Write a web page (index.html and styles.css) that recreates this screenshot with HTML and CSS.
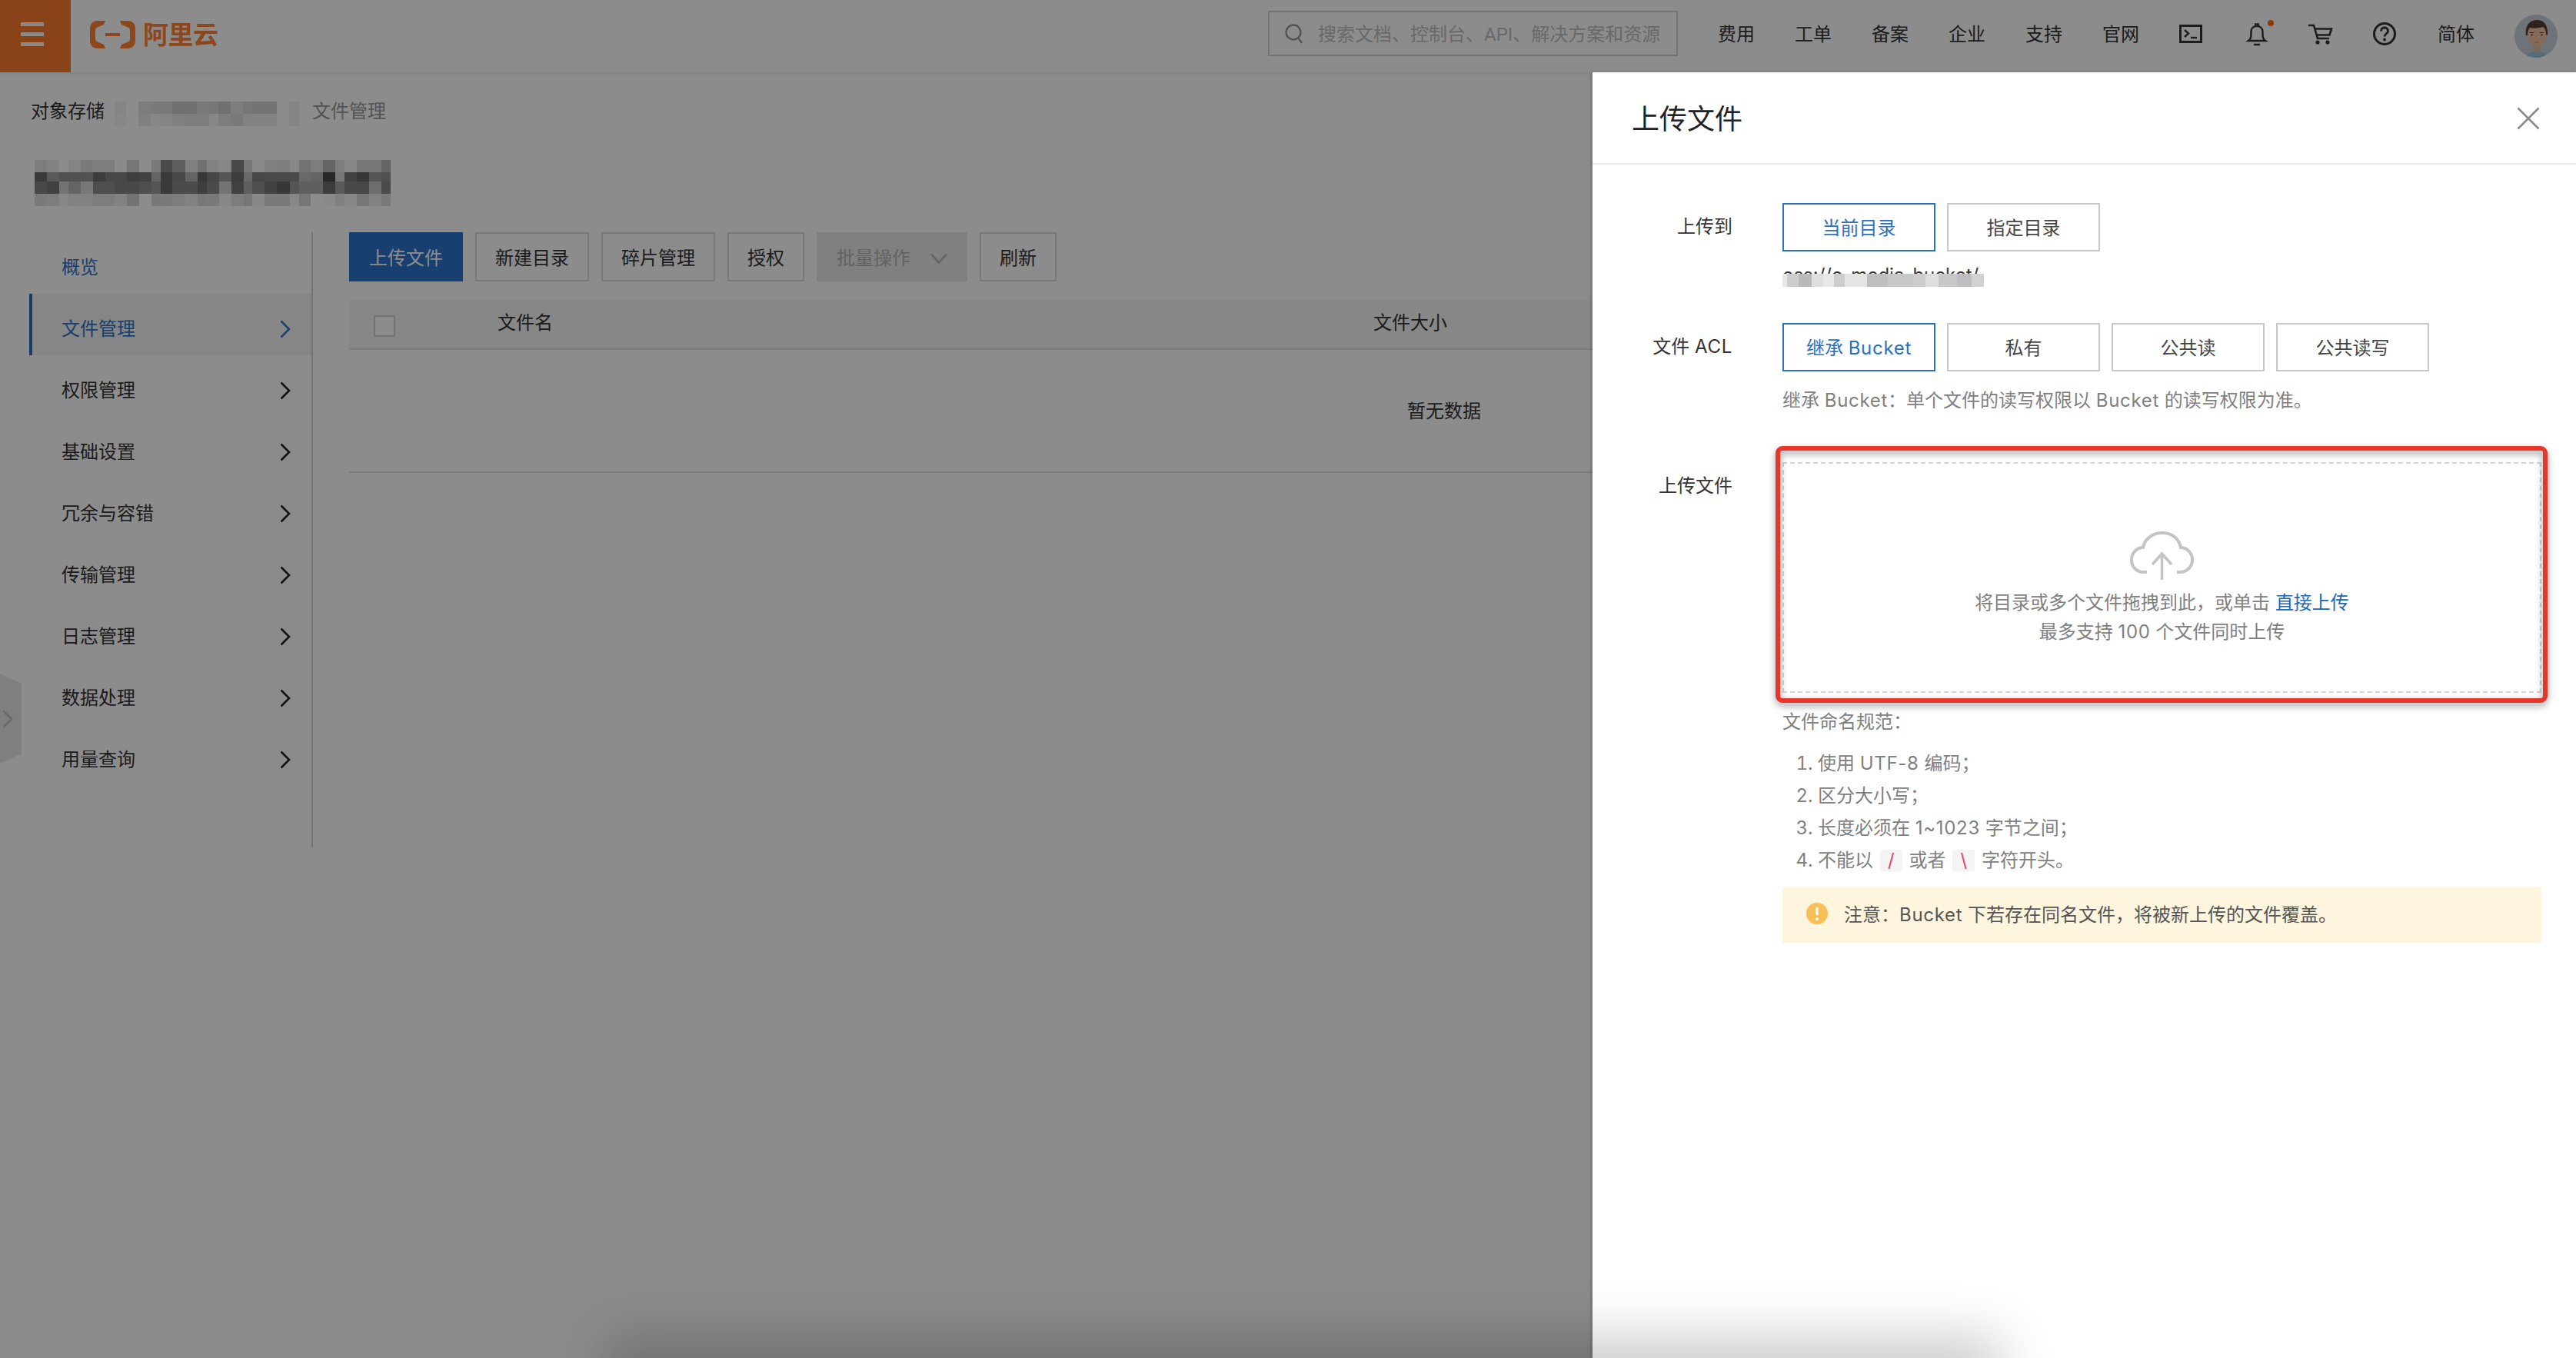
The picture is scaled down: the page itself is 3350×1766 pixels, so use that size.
FILE: index.html
```html
<!DOCTYPE html>
<html lang="zh-CN">
<head>
<meta charset="utf-8">
<title>上传文件</title>
<link rel="stylesheet" href="styles.css">
</head>
<body>
<svg class="sprites" aria-hidden="true"><symbol id="chev" viewBox="0 0 14 24"><path d="M1.5 1.5 12 12 1.5 22.5" fill="none" stroke="currentColor" stroke-width="2.6"/></symbol></svg>

<header class="topbar">
  <div class="burger"><i></i><i></i><i></i></div>
  <div class="logo">
    <svg class="logo-mark" viewBox="0 0 59 36"><path d="M20 0H10C4 0 0 4 0 10V26C0 32 4 36 10 36H20L18 31 11 28C8 27 7 26 7 23V13C7 10 8 9 11 8L18 5ZM39 0H49C55 0 59 4 59 10V26C59 32 55 36 49 36H39L41 31 48 28C51 27 52 26 52 23V13C52 10 51 9 48 8L41 5ZM20 16H39V20H20Z" fill="currentColor"/></svg>
    <span class="logo-text">阿里云</span>
  </div>
  <div class="spacer"></div>
  <div class="search">
    <svg class="search-icon" viewBox="0 0 24 26"><circle cx="11" cy="11" r="9.5" fill="none" stroke="currentColor" stroke-width="2.4"/><path d="M17 18l5 7" stroke="currentColor" stroke-width="2.4"/></svg>
    <span>搜索文档、控制台、API、解决方案和资源</span>
  </div>
  <nav class="topnav">
    <a>费用</a><a>工单</a><a>备案</a><a>企业</a><a>支持</a><a>官网</a>
    <svg class="ticon" viewBox="0 0 32 32"><rect x="1.5" y="5.5" width="27" height="21" fill="none" stroke="currentColor" stroke-width="3"/><path d="M7 11l5 4.500-5 4.500" fill="none" stroke="currentColor" stroke-width="2.4"/><path d="M15 21h8" stroke="currentColor" stroke-width="2.4"/></svg>
    <svg class="ticon" viewBox="0 0 32 32"><path d="M6 25h22c-3-2-3.500-4-3.500-8v-4c0-4-3-7-7.500-7s-7.500 3-7.500 7v4c0 4-.5 6-3.500 8Z" fill="none" stroke="currentColor" stroke-width="2.4"/><path d="M14 3.500h6M13 30h8" stroke="currentColor" stroke-width="2.6"/><circle cx="35" cy="2" r="4" class="dot"/></svg>
    <svg class="ticon" viewBox="0 0 32 32"><path d="M0 5h7l5 17h15M8 9.500h22l-2.500 8H11" fill="none" stroke="currentColor" stroke-width="2.6"/><circle cx="12" cy="27" r="2.600" fill="currentColor"/><circle cx="25" cy="27" r="2.600" fill="currentColor"/></svg>
    <svg class="ticon" viewBox="0 0 32 32"><circle cx="15" cy="16" r="13.500" fill="none" stroke="currentColor" stroke-width="3"/><path d="M10.500 12.500c0-6 9-6 9 0 0 3-4.500 3.500-4.500 7" fill="none" stroke="currentColor" stroke-width="2.800"/><circle cx="15" cy="23.500" r="1.900" fill="currentColor"/></svg>
    <a>简体</a>
    <svg class="avatar" viewBox="0 0 56 56">
      <defs><clipPath id="avc"><circle cx="28" cy="28" r="28"/></clipPath></defs>
      <g clip-path="url(#avc)">
        <rect width="56" height="56" fill="#c6d2dc"/>
        <path d="M15 56c1-6 7-8 14-9 7 1 13 3 14 9Z" fill="#9cc6dc"/>
        <path d="M24 36h10v10l-5 3-5-3Z" fill="#e8bc9c"/>
        <ellipse cx="29" cy="25" rx="12.500" ry="17" fill="#f0c4a2"/>
        <path d="M15 27C13 13 21 7 29.500 7 38 7 44 13 43 27l-2-1c0-5-1-8-4-10-6 2-12 2-17 1-2 2-3 5-3 10Z" fill="#563c36"/>
        <path d="M20 23.500h5M33 23.500h5" stroke="#563c36" stroke-width="1.200"/>
        <circle cx="22.500" cy="26.500" r="1.100" fill="#3c2a25"/><circle cx="35.500" cy="26.500" r="1.100" fill="#3c2a25"/>
        <path d="M26 36h6" stroke="#b88468" stroke-width="1"/>
      </g>
    </svg>
  </nav>
</header>

<main class="page">
  <div class="crumbs">
    <span>对象存储</span>
    <svg class="mosaic crumb-mosaic" id="m-crumb" viewBox="356 22 720 96" preserveAspectRatio="none"></svg>
    <span class="crumb-last">文件管理</span>
  </div>
  <svg class="mosaic title-mosaic" id="m-title" viewBox="44 250 1390 180" preserveAspectRatio="none"></svg>

  <div class="workspace">
    <aside class="side">
      <a class="side-item link">概览</a>
      <a class="side-item link active">文件管理<svg class="chev"><use href="#chev"/></svg></a>
      <a class="side-item">权限管理<svg class="chev"><use href="#chev"/></svg></a>
      <a class="side-item">基础设置<svg class="chev"><use href="#chev"/></svg></a>
      <a class="side-item">冗余与容错<svg class="chev"><use href="#chev"/></svg></a>
      <a class="side-item">传输管理<svg class="chev"><use href="#chev"/></svg></a>
      <a class="side-item">日志管理<svg class="chev"><use href="#chev"/></svg></a>
      <a class="side-item">数据处理<svg class="chev"><use href="#chev"/></svg></a>
      <a class="side-item">用量查询<svg class="chev"><use href="#chev"/></svg></a>
    </aside>
    <section class="content">
      <div class="toolbar">
        <button class="btn primary">上传文件</button>
        <button class="btn">新建目录</button>
        <button class="btn">碎片管理</button>
        <button class="btn">授权</button>
        <button class="btn disabled">批量操作<svg class="btn-caret" viewBox="0 0 22 14"><path d="M1 1.500l10 11 10-11" fill="none" stroke="currentColor" stroke-width="2.400"/></svg></button>
        <button class="btn">刷新</button>
      </div>
      <div class="table-head">
        <span class="checkbox"></span>
        <span>文件名</span>
        <span>文件大小</span>
      </div>
      <div class="table-empty">暂无数据</div>
    </section>
  </div>
</main>

<div class="side-tab"><svg class="tab-chev" viewBox="0 0 14 24"><use href="#chev"/></svg></div>
<div class="overlay"></div>

<aside class="panel">
  <header class="panel-head">
    <h1>上传文件</h1>
    <svg class="close" viewBox="0 0 30 30"><path d="M1.500 1.500l27 27M28.500 1.500l-27 27" stroke="currentColor" stroke-width="2.600"/></svg>
  </header>
  <div class="panel-body">
    <div class="row row-to">
      <label class="label">上传到</label>
      <div class="ctl">
        <div class="opts"><span class="opt on">当前目录</span><span class="opt">指定目录</span></div>
        <div class="path-wrap">
          <span class="path">oss://o-media-bucket/</span>
          <svg class="path-blur" id="m-path" viewBox="302 0 330 50" preserveAspectRatio="none"></svg>
        </div>
      </div>
    </div>
    <div class="row row-acl">
      <label class="label">文件 <span class="en">ACL</span></label>
      <div class="ctl">
        <div class="opts"><span class="opt on"><span>继承 <span class="en">Bucket</span></span></span><span class="opt">私有</span><span class="opt">公共读</span><span class="opt">公共读写</span></div>
        <p class="hint">继承 <span class="en">Bucket</span>：单个文件的读写权限以 <span class="en">Bucket</span> 的读写权限为准。</p>
      </div>
    </div>
    <div class="row row-up">
      <label class="label">上传文件</label>
      <div class="ctl">
        <div class="drop">
          <svg class="cloud" viewBox="0 0 83 63"><path d="M22 53H18C8 53 2 46 2 37 2 28 9 21 17 21 19 10 29 2 42 2 55 2 64 10 66 21 74 21 81 28 81 37 81 46 74 53 65 53H61" fill="none" stroke="currentColor" stroke-width="4"/><path d="M41.500 63V30M29 43l12.500-14L54 43" fill="none" stroke="currentColor" stroke-width="3.600"/></svg>
          <p>将目录或多个文件拖拽到此，或单击 <a>直接上传</a></p>
          <p>最多支持 <span class="en">100</span> 个文件同时上传</p>
          <div class="redbox"></div>
        </div>
        <p class="rules-title">文件命名规范：</p>
        <ol class="rules">
          <li>使用 <span class="en">UTF-8</span> 编码；</li>
          <li>区分大小写；</li>
          <li>长度必须在 <span class="en">1~1023</span> 字节之间；</li>
          <li>不能以 <code>/</code> 或者 <code>\</code> 字符开头。</li>
        </ol>
        <div class="alert">
          <svg class="alert-icon" viewBox="0 0 28 28"><circle cx="14" cy="14" r="14" fill="currentColor"/><path d="M14 6v10" stroke="#fff" stroke-width="3.200"/><circle cx="14" cy="21" r="2" fill="#fff"/></svg>
          <span class="alert-text">注意：<span class="en">Bucket</span> 下若存在同名文件，将被新上传的文件覆盖。</span>
        </div>
      </div>
    </div>
  </div>
</aside>

<div class="bottom-shade"></div>
<script src="mosaic.js"></script>
</body>
</html>
```
FILE: styles.css
```css
* { box-sizing: border-box; }
html, body { margin: 0; height: 100%; }
body {
  position: relative;
  overflow: hidden;
  background: #fff;
  color: #333;
  font-family: Inter, "Noto Sans CJK SC", sans-serif;
  font-size: 24px;
  line-height: 34px;
}
p, h1, ol { margin: 0; }
.en { letter-spacing: .7px; }
.sprites { position: absolute; width: 0; height: 0; }

/* top bar */
.topbar {
  display: flex;
  align-items: center;
  height: 94px;
  padding-right: 24px;
  box-shadow: 0 2px 4px rgba(0, 0, 0, .08);
}
.burger {
  display: flex;
  flex-direction: column;
  justify-content: center;
  gap: 8px;
  width: 92px;
  height: 94px;
  padding: 0 35px 6px 27px;
  background: #fb782c;
}
.burger i { display: block; height: 5px; background: #fff; opacity: .95; }
.logo { display: flex; align-items: center; gap: 10px; margin-left: 25px; margin-top: -4px; color: #ff8136; }
.logo-mark { width: 59px; height: 36px; }
.logo-text { font-size: 33px; font-weight: 700; line-height: 36px; letter-spacing: -.5px; }
.spacer { flex: 1; }
.search {
  display: flex;
  align-items: center;
  gap: 19px;
  width: 533px;
  height: 59px;
  margin-top: -7px;
  padding-left: 20px;
  border: 2px solid #d2d2d2;
  color: #c0c0c0;
  white-space: nowrap;
  overflow: hidden;
}
.search span { padding-top: 2px; font-family: Roboto, "Noto Sans CJK SC", sans-serif; }
.search-icon { flex: none; width: 24px; height: 26px; color: #9a9a9a; }
.topnav { display: flex; align-items: center; gap: 52px; margin-left: 52px; margin-top: -6px; color: #333; }
.topnav a { width: 48px; white-space: nowrap; padding-top: 2px; }
.ticon { width: 32px; height: 32px; overflow: visible; color: #333; }
.ticon .dot { fill: #ff6a00; }
.avatar { width: 56px; height: 56px; margin-top: 6px; }

/* page behind the overlay */
.crumbs { display: flex; height: 34px; margin: 32px 0 0 40px; }
.crumbs span { padding-top: 2px; }
.crumb-last { color: #9a9a9a; margin-left: 17px; }
.mosaic { display: block; position: relative; z-index: 11; shape-rendering: crispEdges; }
.crumb-mosaic { width: 240px; height: 32px; margin: 6px 0 0 13px; }
.title-mosaic { width: 463px; height: 60px; margin: 48px 0 34px 45px; }

.workspace { display: flex; padding: 0 48px 0 38px; }
.side { flex: none; width: 369px; height: 800px; border-right: 2px solid #d4d4d4; }
.side-item {
  display: flex;
  align-items: center;
  justify-content: space-between;
  height: 80px;
  padding: 12px 27px 0 38px;
  border-left: 4px solid transparent;
  color: #333;
}
.side-item.link { color: #2f74c8; }
.side-item.active { background: #f4f4f4; border-left-color: #2a6cbc; }
.chev { width: 14px; height: 24px; color: #222; }
.active .chev { color: #2f74c8; }

.content { flex: 1; margin-left: 47px; }
.toolbar { display: flex; gap: 16px; }
.btn {
  display: flex;
  align-items: center;
  justify-content: center;
  height: 64px;
  padding: 3px 24px 0;
  border: 2px solid #dadada;
  background: #fff;
  color: #333;
  font: inherit;
}
.btn.primary { background: #2a74ca; border-color: #2a74ca; color: #fff; }
.btn.disabled { gap: 26px; background: #e9e9e9; border-color: #e9e9e9; color: #b4b4b4; }
.btn-caret { width: 22px; height: 14px; }
.table-head {
  display: grid;
  grid-template-columns: 161px 1139px 1fr;
  align-items: center;
  height: 64px;
  margin-top: 25px;
  padding-left: 32px;
  background: #f6f6f6;
  border-bottom: 2px solid #e2e2e2;
}
.table-head span { padding-bottom: 4px; }
.table-head .checkbox { display: block; width: 28px; height: 28px; padding: 0; border: 2px solid #cfcfcf; background: #fff; margin-top: 4px; }
.table-empty {
  display: flex;
  align-items: center;
  justify-content: center;
  height: 160px;
  padding-top: 2px;
  border-bottom: 2px solid #e2e2e2;
}

.side-tab {
  position: absolute;
  left: 0;
  top: 876px;
  width: 28px;
  height: 117px;
  background: #e8e8e8;
  clip-path: polygon(0 0, 100% 11%, 100% 89%, 0 100%);
  display: flex;
  align-items: center;
}
.tab-chev { width: 14px; height: 24px; margin-left: 3px; color: #bdbdbd; }

.overlay { position: absolute; inset: 0; z-index: 10; background: rgba(0, 0, 0, .45); }

/* slide-over panel */
.panel {
  position: absolute;
  z-index: 20;
  top: 94px;
  right: 0;
  bottom: 0;
  width: 1279px;
  background: #fff;
  box-shadow: -2px 0 4px rgba(0, 0, 0, .18);
  color: #333;
}
.panel-head {
  display: flex;
  align-items: center;
  justify-content: space-between;
  height: 120px;
  padding: 0 47px 0 51px;
  border-bottom: 2px solid #e9e9e9;
}
.panel-head h1 { padding-top: 3px; font-size: 36px; font-weight: 400; color: #222; line-height: 50px; }
.close { width: 30px; height: 30px; margin-top: 2px; color: #8a8a8a; }
.panel-body { padding-top: 50px; }
.row { display: flex; gap: 65px; }
.label { flex: none; width: 182px; text-align: right; padding-top: 14px; }
.ctl { width: 987px; }
.row-to { height: 156px; }
.row-acl { height: 181px; }
.opts { display: flex; gap: 15px; }
.opt {
  display: flex;
  align-items: center;
  justify-content: center;
  width: 199px;
  height: 63px;
  padding-top: 3px;
  border: 2px solid #c8c8c8;
  color: #444;
}
.opt.on { border-color: #2b6fbe; color: #2b6fbe; }
.path-wrap { position: relative; height: 46px; padding-top: 14px; overflow: hidden; }
.path { color: #333; line-height: 34px; }
.path-blur { position: absolute; left: -10px; top: 29px; width: 272px; height: 17px; shape-rendering: crispEdges; }
.hint { margin-top: 21px; color: #808080; }

.drop {
  position: relative;
  display: flex;
  flex-direction: column;
  align-items: center;
  height: 300px;
  padding-top: 88px;
  border: 2px dashed #d4d4d4;
  color: #808080;
  line-height: 38px;
}
.drop a { color: #1f66b8; }
.cloud { width: 83px; height: 63px; margin-bottom: 11px; color: #c4c4c4; }
.redbox {
  position: absolute;
  left: -11px;
  right: -10px;
  top: -23px;
  bottom: -15px;
  border: 6px solid #e8362a;
  border-radius: 9px;
  filter: drop-shadow(0 4px 5px rgba(0, 0, 0, .4));
}
.rules-title { margin-top: 19px; line-height: 38px; color: #808080; }
.rules { margin-top: 14px; padding-left: 46px; line-height: 42px; color: #808080; }
code {
  display: inline-block;
  width: 29px;
  height: 28px;
  margin: 0 2px;
  background: #f4f4f4;
  border-radius: 3px;
  color: #e0456a;
  font: inherit;
  line-height: 28px;
  text-align: center;
}
.alert {
  display: flex;
  align-items: center;
  gap: 21px;
  height: 72px;
  margin-top: 14px;
  padding: 0 0 4px 31px;
  background: #fdf5dd;
  color: #555;
}
.alert-text { padding-top: 4px; }
.alert-icon { width: 28px; height: 28px; color: #f7bf56; }

.bottom-shade {
  position: absolute;
  z-index: 30;
  left: 820px;
  width: 1750px;
  top: 1770px;
  height: 40px;
  box-shadow: 0 0 70px 32px rgba(0, 0, 0, .2);
}
```
FILE: mosaic.js
```js
var W = [[44,48],[92,48],[140,36],[176,48],[224,48],[272,48],[320,36],[356,48],[404,48],[452,48],[500,35],[535,47],[582,50],[632,48],[680,36],[716,48],[764,48],[812,48],[860,35],[895,48],[943,48],[991,49],[1040,36],[1076,47],[1123,48],[1171,48],[1219,36],[1255,48],[1303,48],[1351,48],[1399,35]];
var TITLE = [
  [250,48,[125,130,140,132,122,125,125,138,118,140,122,75,95,128,112,130,135,72,118,138,128,125,135,115,125,100,125,135,118,118,100]],
  [298,36,[58,90,80,80,82,60,72,72,62,65,100,58,72,100,55,70,85,60,105,72,75,75,75,105,100,40,120,65,55,85,80]],
  [334,48,[72,65,115,100,120,78,78,72,72,78,85,58,75,75,62,75,115,65,95,78,65,55,85,95,95,60,90,72,72,110,75]],
  [382,48,[122,125,135,130,130,125,125,130,115,140,120,122,125,130,120,122,135,125,118,135,122,122,135,118,140,138,128,135,118,130,122]]
];
var CW = [[356,46],[450,48],[498,36],[534,48],[582,48],[630,48],[678,48],[726,36],[762,48],[810,48],[858,36],[894,48],[942,48],[1038,38]];
var CROW = [
  [22,48,[133,125,122,122,112,112,122,118,112,125,118,115,115,132]],
  [70,48,[135,128,135,132,128,125,125,135,125,122,130,130,130,132]]
];
var PW = [[302,20],[322,18],[340,20],[360,18],[378,17],[395,18],[413,34],[447,33],[480,40],[520,20],[540,20],[560,30],[590,22],[612,20]];
var PROW = [[0,50,[232,205,185,222,232,205,228,190,200,205,222,200,190,210]]];

function paint(id, cols, rows) {
  var svg = document.getElementById(id);
  rows.forEach(function (row) {
    row[2].forEach(function (g, i) {
      var r = document.createElementNS('http://www.w3.org/2000/svg', 'rect');
      r.setAttribute('x', cols[i][0]);
      r.setAttribute('width', cols[i][1]);
      r.setAttribute('y', row[0]);
      r.setAttribute('height', row[1]);
      r.setAttribute('fill', 'rgb(' + g + ',' + g + ',' + g + ')');
      svg.appendChild(r);
    });
  });
}
paint('m-title', W, TITLE);
paint('m-crumb', CW, CROW);
paint('m-path', PW, PROW);
```
